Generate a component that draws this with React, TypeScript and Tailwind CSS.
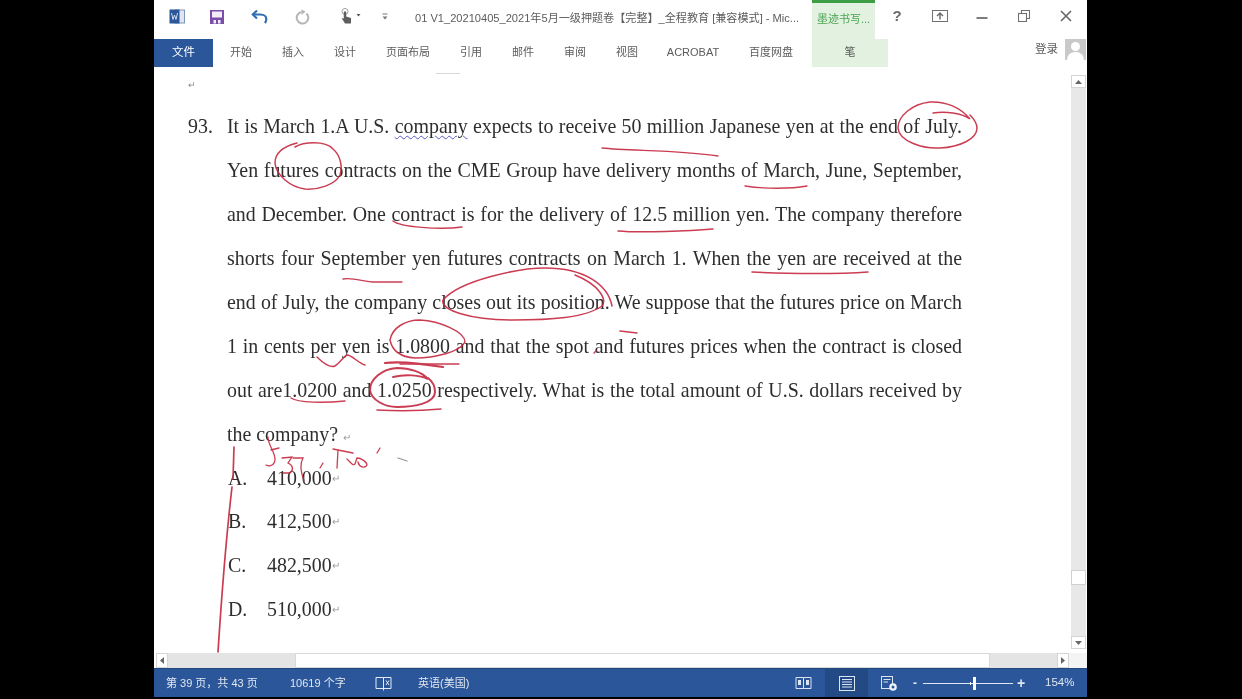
import React from "react";

const serif = "[font-family:'Liberation_Serif','Noto_Sans_CJK_SC',serif]";
const RET = () => <span className="text-[#9a9a9a] text-[10px] font-['Liberation_Sans',sans-serif]">↵</span>;

const tabs: [string, string][] = [
  ["开始", "w-[52px]"], ["插入", "w-[52px]"], ["设计", "w-[52px]"], ["页面布局", "w-[74px]"], ["引用", "w-[52px]"],
  ["邮件", "w-[52px]"], ["审阅", "w-[52px]"], ["视图", "w-[52px]"], ["ACROBAT", "w-[80px]"], ["百度网盘", "w-[76px]"],
];

const TitleIcons = () => (
  <>
    <div className="w-[46px] flex justify-center">
      <svg width="16" height="15" viewBox="0 0 16 15">
        <rect x="6" y="1" width="9.5" height="13" fill="#dfe6f1" stroke="#8096b8" />
        <rect x="0.5" y="0.5" width="10" height="14" fill="#2b579a" />
        <path d="M2.5 4 L4 10.5 L5.5 6 L7 10.5 L8.5 4" stroke="#cdd9ec" strokeWidth="1" fill="none" />
      </svg>
    </div>
    <div className="w-[33px] flex justify-center">
      <svg width="16" height="16" viewBox="0 0 16 16">
        <path d="M1 1 H15 V15 H1 Z" fill="#7a4fa8" />
        <rect x="3" y="2.5" width="10" height="6" fill="#f3eef8" />
        <rect x="4.5" y="11" width="2.5" height="3.5" fill="#f3eef8" />
        <rect x="9" y="11" width="2.5" height="3.5" fill="#f3eef8" />
      </svg>
    </div>
    <div className="w-[53px] flex justify-center">
      <svg width="17" height="15" viewBox="0 0 17 15" fill="none">
        <path d="M6 1.5 L1.8 5.5 L6 9.5" stroke="#2f6fb3" strokeWidth="2.2" />
        <path d="M2.5 5.5 H9.5 C13 5.5 15.3 7.5 15.3 10 C15.3 11.5 14.8 13 14 14.2" stroke="#2f6fb3" strokeWidth="2.2" />
      </svg>
    </div>
    <div className="w-[31px] flex justify-center">
      <svg width="16" height="16" viewBox="0 0 16 16" fill="none">
        <path d="M7.5 3 A5.8 5.8 0 1 0 12.5 4.5" stroke="#b5b5b5" strokeWidth="2" />
        <path d="M9.5 0.5 V6 L13.5 2.5 Z" fill="#b5b5b5" transform="translate(-2 0)" />
      </svg>
    </div>
    <div className="w-[53px] flex justify-center pl-[15px]">
      <svg width="22" height="17" viewBox="0 0 22 17">
        <circle cx="5" cy="3.5" r="3" fill="none" stroke="#a0a0a0" strokeWidth="1" />
        <path d="M3.8 3.5 H6.2 V8.5 L11 10 V15.5 H5 L1.5 10 L3.8 10.5 Z" fill="#5f5f5f" />
        <path d="M16.5 6 H20.5 L18.5 8.5 Z" fill="#555" />
      </svg>
    </div>
    <div className="w-[30px] flex justify-center">
      <svg width="8" height="8" viewBox="0 0 8 8">
        <path d="M1.5 1 H6.5" stroke="#777" strokeWidth="1" />
        <path d="M1.5 3.5 H6.5 L4 6.5 Z" fill="#777" />
      </svg>
    </div>
  </>
);

const Line = ({ children, last }: { children: React.ReactNode; last?: boolean }) => (
  <div className={`h-[43.95px] leading-[43.95px] w-[735px] whitespace-nowrap ${last ? "" : "text-justify [text-align-last:justify]"}`}>{children}</div>
);

const Option = ({ l, v }: { l: string; v: string }) => (
  <div className="h-[43.95px] leading-[43.95px] flex whitespace-nowrap">
    <span className="w-[40px] pl-px">{l}</span>
    <span>{v}</span>
    <RET />
  </div>
);

const Ink = () => (
  <svg className="absolute left-0 top-0 pointer-events-none opacity-90" width="1242" height="699" viewBox="0 0 1242 699" fill="none" stroke="#c5283f" strokeWidth="1.5" strokeLinecap="round">
    <path d="M933 113 C945 111 962 113 970 119 C960 107 945 101 930 102 C912 104 898 116 898 128 C899 141 922 149 940 148 C960 147 977 139 977 128 C977 122 973 118 970 115" />
    <path d="M602 148 C630 151 680 150 718 156" strokeWidth="1.3" />
    <path d="M295 147 C303 142 325 140 333 149 C340 155 343 166 340 175 C335 185 318 190 305 189 C290 187 276 175 275 163 C275 152 285 146 297 143" />
    <path d="M745 186 C765 189 790 189 807 186" strokeWidth="1.3" />
    <path d="M393 221 C400 227 440 230 462 227" />
    <path d="M618 231 C640 233 690 231 713 229" />
    <path d="M343 279 C352 277 365 282 375 282 C385 282 395 282 402 282" strokeWidth="1.3" />
    <path d="M752 272 C790 274 840 274 868 272" />
    <path d="M612 306 C608 285 585 268 545 268 C520 268 460 280 443 300 C440 310 470 320 513 320 C550 320 585 318 602 306 C607 300 600 285 575 275" />
    <path d="M620 331 L637 333" />
    <path d="M594 353 L596 351" />
    <path d="M390 340 C392 328 405 320 420 320 C440 321 465 332 465 342 C460 352 435 358 415 358 C400 357 392 350 390 340" />
    <path d="M385 363 C400 361 425 364 443 367" strokeWidth="2.2" />
    <path d="M400 364 L459 364" strokeWidth="1.3" />
    <path d="M317 357 C322 362 330 368 335 366 C340 363 344 356 347 355 C352 355 358 363 365 365" />
    <path d="M291 398 C298 403 325 403 345 401" />
    <path d="M393 377 C405 374 420 375 428 379 C422 372 410 368 397 368 C382 369 370 379 370 390 C371 400 385 407 397 407 C415 407 435 403 435 392 C435 386 432 381 428 378" strokeWidth="2" />
    <path d="M377 410 C395 411 420 411 441 409" />
    <path d="M234 447 L233 479 M232 487 C227 530 222 590 218 652" strokeWidth="1.7" />
    <path d="M268 437 C268 445 275 452 275 459 C275 465 270 467 266 465 M271 450 L279 448" strokeWidth="1.3" />
    <path d="M282 458 L292 457 L288 463 C293 465 294 470 290 473 L283 473" strokeWidth="1.3" />
    <path d="M293 458 L303 458 C300 463 300 470 304 481" strokeWidth="1.3" />
    <path d="M323 463 L320 468" strokeWidth="1.3" />
    <path d="M333 449 L353 453 M338 450 L337 468" strokeWidth="1.3" />
    <path d="M347 459 C351 463 353 466 355 464 L357 458 C361 458 367 462 367 465 C365 469 359 467 358 462" strokeWidth="1.3" />
    <path d="M380 448 L377 453" strokeWidth="1.3" />
    <path d="M398 458 L407 461" stroke="#8a8a8a" strokeWidth="1.3" />
  </svg>
);

export default function App() {
  return (
    <div className="relative h-[699px] w-[1242px] bg-black overflow-hidden font-['Liberation_Sans','Noto_Sans_CJK_SC',sans-serif]">
      <div className="ml-[154px] w-[933px] h-[697px] bg-white flex flex-col blur-[0.4px]">
        {/* title bar */}
        <div className="h-[39px] flex items-start">
          <div className="flex items-center h-[32px] pt-px"><TitleIcons /></div>
          <div className="flex-1 min-w-0 h-[36px] flex items-center pl-[15px] text-[11.1px] text-[#5c5c5c] whitespace-nowrap pt-px">
            01 V1_20210405_2021年5月一级押题卷【完整】_全程教育 [兼容模式] - Mic...
          </div>
          <div className="w-[63px] h-[39px] bg-[#e3f1e1] border-t-[3px] border-[#3e9e45] flex items-center justify-center text-[11px] text-[#4aa552] whitespace-nowrap pb-[4px]">墨迹书写...</div>
          <div className="w-[212px] h-[32px] flex items-center text-[#6a6a6a]">
            <div className="w-[44px] text-center font-bold text-[15px]">?</div>
            <div className="w-[42px] flex justify-center">
              <svg width="16" height="12" viewBox="0 0 16 12" fill="none" stroke="#6f6f6f"><rect x="0.5" y="0.5" width="15" height="11" /><path d="M8 9.5 V4 M5 6 L8 3 L11 6" strokeWidth="1.5" /></svg>
            </div>
            <div className="w-[42px] flex justify-center">
              <svg width="12" height="10" viewBox="0 0 12 10"><path d="M0.5 7 H11.5" stroke="#6f6f6f" strokeWidth="1.8" /></svg>
            </div>
            <div className="w-[42px] flex justify-center">
              <svg width="12" height="12" viewBox="0 0 12 12" fill="none" stroke="#6f6f6f" strokeWidth="1.1"><rect x="0.5" y="3.5" width="8" height="8" /><path d="M3.5 3.5 V0.5 H11.5 V8.5 H8.5" /></svg>
            </div>
            <div className="w-[42px] flex justify-center">
              <svg width="12" height="12" viewBox="0 0 12 12" stroke="#6a6a6a" strokeWidth="1.7"><path d="M1 1 L11 11 M11 1 L1 11" /></svg>
            </div>
          </div>
        </div>
        {/* tabs */}
        <div className="h-[28px] flex items-stretch text-[11px] text-[#5c5c5c] whitespace-nowrap">
          <div className="w-[59px] bg-[#2b579a] text-white flex items-center justify-center text-[11.5px] mr-[2px] pb-[1px]">文件</div>
          {tabs.map(([t, w]) => (
            <div key={t} className={`${w} flex items-center justify-center pb-[2px]`}>{t}</div>
          ))}
          <div className="ml-[3px] w-[76px] bg-[#e3f1e1] flex items-center justify-center pb-[2px]">笔</div>
          <div className="flex-1 flex items-start justify-end">
            <span className="text-[11.5px] leading-[20px] mr-[7px]">登录</span>
            <div className="w-[21px] h-[21px] mr-[1px] bg-[#c9c9c9] overflow-hidden flex flex-col items-center">
              <div className="mt-[3px] w-[9px] h-[9px] rounded-full bg-white" />
              <div className="mt-[1px] w-[17px] h-[9px] rounded-t-full bg-white" />
            </div>
          </div>
        </div>
        {/* document + vertical scroll */}
        <div className="flex-1 min-h-0 flex relative">
          <div className={`flex-1 min-w-0 ${serif} text-[19.9px] text-[#2e2e2e] pt-[38px] pl-[34px]`}>
            <div className="flex">
              <span className="w-[39px] h-[43.95px] leading-[43.95px]">93.</span>
              <div>
                <Line>It is March 1.A U.S. <span className="underline decoration-wavy decoration-[#5a5ac8] decoration-1 underline-offset-2">company</span> expects to receive 50 million Japanese yen at the end of July.</Line>
                <Line>Yen futures contracts on the CME Group have delivery months of March, June, September,</Line>
                <Line>and December. One contract is for the delivery of 12.5 million yen. The company therefore</Line>
                <Line>shorts four September yen futures contracts on March 1. When the yen are received at the</Line>
                <Line>end of July, the company closes out its position. We suppose that the futures price on March</Line>
                <Line>1 in cents per yen is 1.0800 and that the spot and futures prices when the contract is closed</Line>
                <Line>out are1.0200 and 1.0250 respectively. What is the total amount of U.S. dollars received by</Line>
                <Line last>the company? <RET /></Line>
                <Option l="A." v="410,000" />
                <Option l="B." v="412,500" />
                <Option l="C." v="482,500" />
                <Option l="D." v="510,000" />
              </div>
            </div>
          </div>
          <div className="w-[15px] mr-px mt-[8px] mb-[4px] bg-[#e8e8e8] flex flex-col items-stretch">
            <div className="h-[13px] bg-white border border-[#d5d5d5] flex items-center justify-center">
              <svg width="7" height="4" viewBox="0 0 7 4"><path d="M0 4 L3.5 0 L7 4 Z" fill="#666" /></svg>
            </div>
            <div className="flex-1" />
            <div className="h-[15px] bg-white border border-[#d0d0d0]" />
            <div className="h-[51px]" />
            <div className="h-[13px] bg-white border border-[#d5d5d5] flex items-center justify-center">
              <svg width="7" height="4" viewBox="0 0 7 4"><path d="M0 0 L3.5 4 L7 0 Z" fill="#666" /></svg>
            </div>
          </div>
          <div className="absolute left-[34px] top-[14px] text-[#8a8a8a] text-[9px] leading-none">↵</div>
          <div className="absolute left-[282px] top-[6px] w-[24px] h-px bg-[#d8d8d8]" />
        </div>
        {/* horizontal scroll */}
        <div className="h-[15px] flex items-stretch">
          <div className="ml-[2px] w-[12px] bg-white border border-[#d5d5d5] flex items-center justify-center">
            <svg width="4" height="7" viewBox="0 0 4 7"><path d="M4 0 L0 3.5 L4 7 Z" fill="#666" /></svg>
          </div>
          <div className="w-[127px] bg-[#e4e4e4]" />
          <div className="w-[695px] bg-white border border-[#d8d8d8]" />
          <div className="w-[67px] bg-[#e4e4e4]" />
          <div className="w-[12px] bg-white border border-[#d5d5d5] flex items-center justify-center">
            <svg width="4" height="7" viewBox="0 0 4 7"><path d="M0 0 L4 3.5 L0 7 Z" fill="#666" /></svg>
          </div>
          <div className="flex-1 bg-[#f4f4f4]" />
        </div>
        {/* status bar */}
        <div className="h-[29px] bg-[#2b579a] flex items-center text-white/85 text-[11px] whitespace-nowrap border-t border-[#24497f]">
          <span className="ml-[12px] w-[124px]">第 39 页，共 43 页</span>
          <span className="w-[85px]">10619 个字</span>
          <span className="w-[43px]">
            <svg width="17" height="15" viewBox="0 0 17 15" fill="none" stroke="#e5ecf6" strokeWidth="1"><path d="M8.5 1.5 H1 V12.5 H8.5 Z M8.5 1.5 H16 V12.5 H8.5 M8.5 12.5 V14.5" /><path d="M11 4.5 L14 9 M14 4.5 L11 9" /></svg>
          </span>
          <span>英语(美国)</span>
          <div className="flex-1" />
          <div className="h-full flex items-center">
            <div className="w-[43px] flex justify-center">
              <svg width="17" height="14" viewBox="0 0 17 14" fill="none" stroke="#dce5f2"><path d="M8.5 1.5 H1 V12.5 H8.5 Z M8.5 1.5 H16 V12.5 H8.5" /><rect x="3" y="4" width="3" height="5" fill="#dce5f2" stroke="none" /><rect x="11" y="4" width="3" height="5" fill="#dce5f2" stroke="none" /></svg>
            </div>
            <div className="w-[43px] h-full bg-[#234a85] flex items-center justify-center">
              <svg width="16" height="15" viewBox="0 0 16 15" fill="none" stroke="#dce5f2"><rect x="0.5" y="0.5" width="15" height="14" /><path d="M3 3.5 H13 M3 6 H13 M3 8.5 H13 M3 11 H13" /></svg>
            </div>
            <div className="w-[42px] flex justify-center">
              <svg width="16" height="15" viewBox="0 0 16 15" fill="none"><rect x="0.5" y="0.5" width="11" height="12" stroke="#dce5f2" /><path d="M2.5 3.5 H9.5 M2.5 6 H7" stroke="#dce5f2" /><circle cx="12" cy="11" r="3.8" fill="#eef3fa" /><circle cx="12" cy="11" r="1.5" fill="#2b579a" /></svg>
            </div>
            <span className="w-[3px] ml-[3px] font-bold text-[12px] leading-none text-center">-</span>
            <div className="w-[90px] h-px bg-[#dfe7f3] relative ml-[7px] mr-[3px]">
              <div className="absolute left-[50px] top-[-6px] w-[3px] h-[13px] bg-white" />
              <div className="absolute left-[47px] top-[-1px] w-px h-[3px] bg-white" />
            </div>
            <span className="w-[10px] font-bold text-[14px] leading-none text-center">+</span>
            <span className="w-[52px] pl-[19px] text-[11.5px]">154%</span>
            <span className="w-[9px]" />
          </div>
        </div>
      </div>
      <Ink />
    </div>
  );
}
